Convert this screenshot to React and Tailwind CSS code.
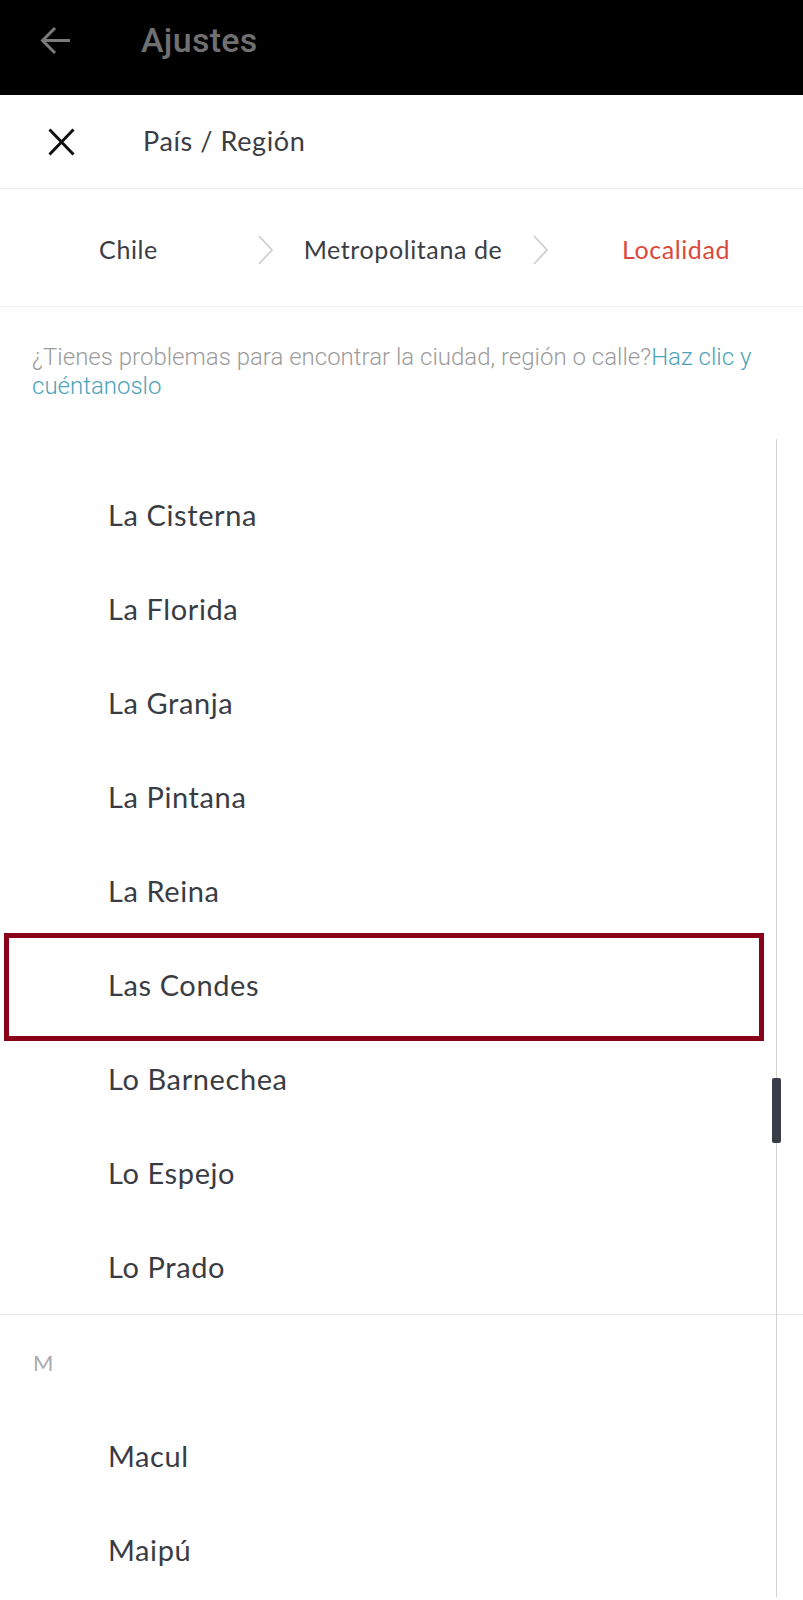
import React from "react";

const groups = [
  {
    letter: null,
    items: [
      "La Cisterna",
      "La Florida",
      "La Granja",
      "La Pintana",
      "La Reina",
      "Las Condes",
      "Lo Barnechea",
      "Lo Espejo",
      "Lo Prado",
    ],
  },
  { letter: "M", items: ["Macul", "Maipú"] },
];

const Chevron = () => (
  <svg width="17" height="30" viewBox="0 0 17 30" fill="none">
    <path d="M2 1 L15 15 L2 29" stroke="#cfcfcf" strokeWidth="1.8" />
  </svg>
);

export default function App() {
  return (
    <div className="w-[803px] min-h-[1600px] bg-white font-['Lato',sans-serif] overflow-hidden">
      {/* top bar */}
      <div className="h-[95px] bg-black flex items-center pb-[14px]">
        <svg className="ml-[40px]" width="31" height="31" viewBox="0 0 31 31" fill="none">
          <path d="M30 15.5 H3 M15 3 L2.5 15.5 L15 28" stroke="#7b7b7b" strokeWidth="3" />
        </svg>
        <span className="ml-[70px] font-['Roboto',sans-serif] font-medium text-[34px] tracking-[0.3px] text-[#707070]">
          Ajustes
        </span>
      </div>

      {/* title row */}
      <div className="h-[94px] flex items-center border-b border-[#ececec]">
        <svg className="ml-[48px]" width="27" height="28" viewBox="0 0 27 28" fill="none">
          <path d="M1.5 1.5 L25.5 26.5 M25.5 1.5 L1.5 26.5" stroke="#111" strokeWidth="3" />
        </svg>
        <span className="ml-[68px] text-[27px] tracking-[0.6px] text-[#3b3d44]">País / Región</span>
      </div>

      {/* breadcrumb */}
      <div className="h-[118px] flex items-center border-b border-[#f0f0f0] text-[25px] tracking-[0.6px] pt-[4px]">
        <div className="w-[257px] text-center text-[#3b3d44]">Chile</div>
        <Chevron />
        <div className="w-[258px] text-center text-[#3b3d44]">Metropolitana de</div>
        <Chevron />
        <div className="flex-1 text-center text-[#d9493c]">Localidad</div>
      </div>

      {/* help text */}
      <p className="px-[32px] pt-[36px] font-['Roboto',sans-serif] font-light text-[24px] leading-[29px] text-[#9c9c9c]">
        ¿Tienes problemas para encontrar la ciudad, región o calle?
        <a className="text-[#4ea2b8]">Haz clic y cuéntanoslo</a>
      </p>

      {/* list */}
      <div className="relative mt-[38px] pt-[29px]">
        <div className="absolute left-[776px] top-0 bottom-0 w-px bg-[#d2d2d2]" />
        <div className="absolute left-[772px] top-[639px] w-[9px] h-[65px] rounded-[2px] bg-[#3a3c46] z-10" />

        {groups.map((g, gi) => (
          <div key={gi} className={gi > 0 ? "border-t border-[#e6e6e6]" : ""}>
            {g.letter && (
              <div className="h-[94px] flex items-center pl-[33px] text-[22px] text-[#ababab]">
                {g.letter}
              </div>
            )}
            {g.items.map((name) => (
              <div
                key={name}
                className="relative h-[94px] flex items-center pl-[108px] text-[29px] tracking-[0.6px] text-[#3a3c44]"
              >
                {name}
                {name === "Las Condes" && (
                  <div className="absolute left-[4px] top-[-5px] w-[760px] h-[108px] border-[5px] border-[#8a0019]" />
                )}
              </div>
            ))}
          </div>
        ))}
      </div>
    </div>
  );
}
